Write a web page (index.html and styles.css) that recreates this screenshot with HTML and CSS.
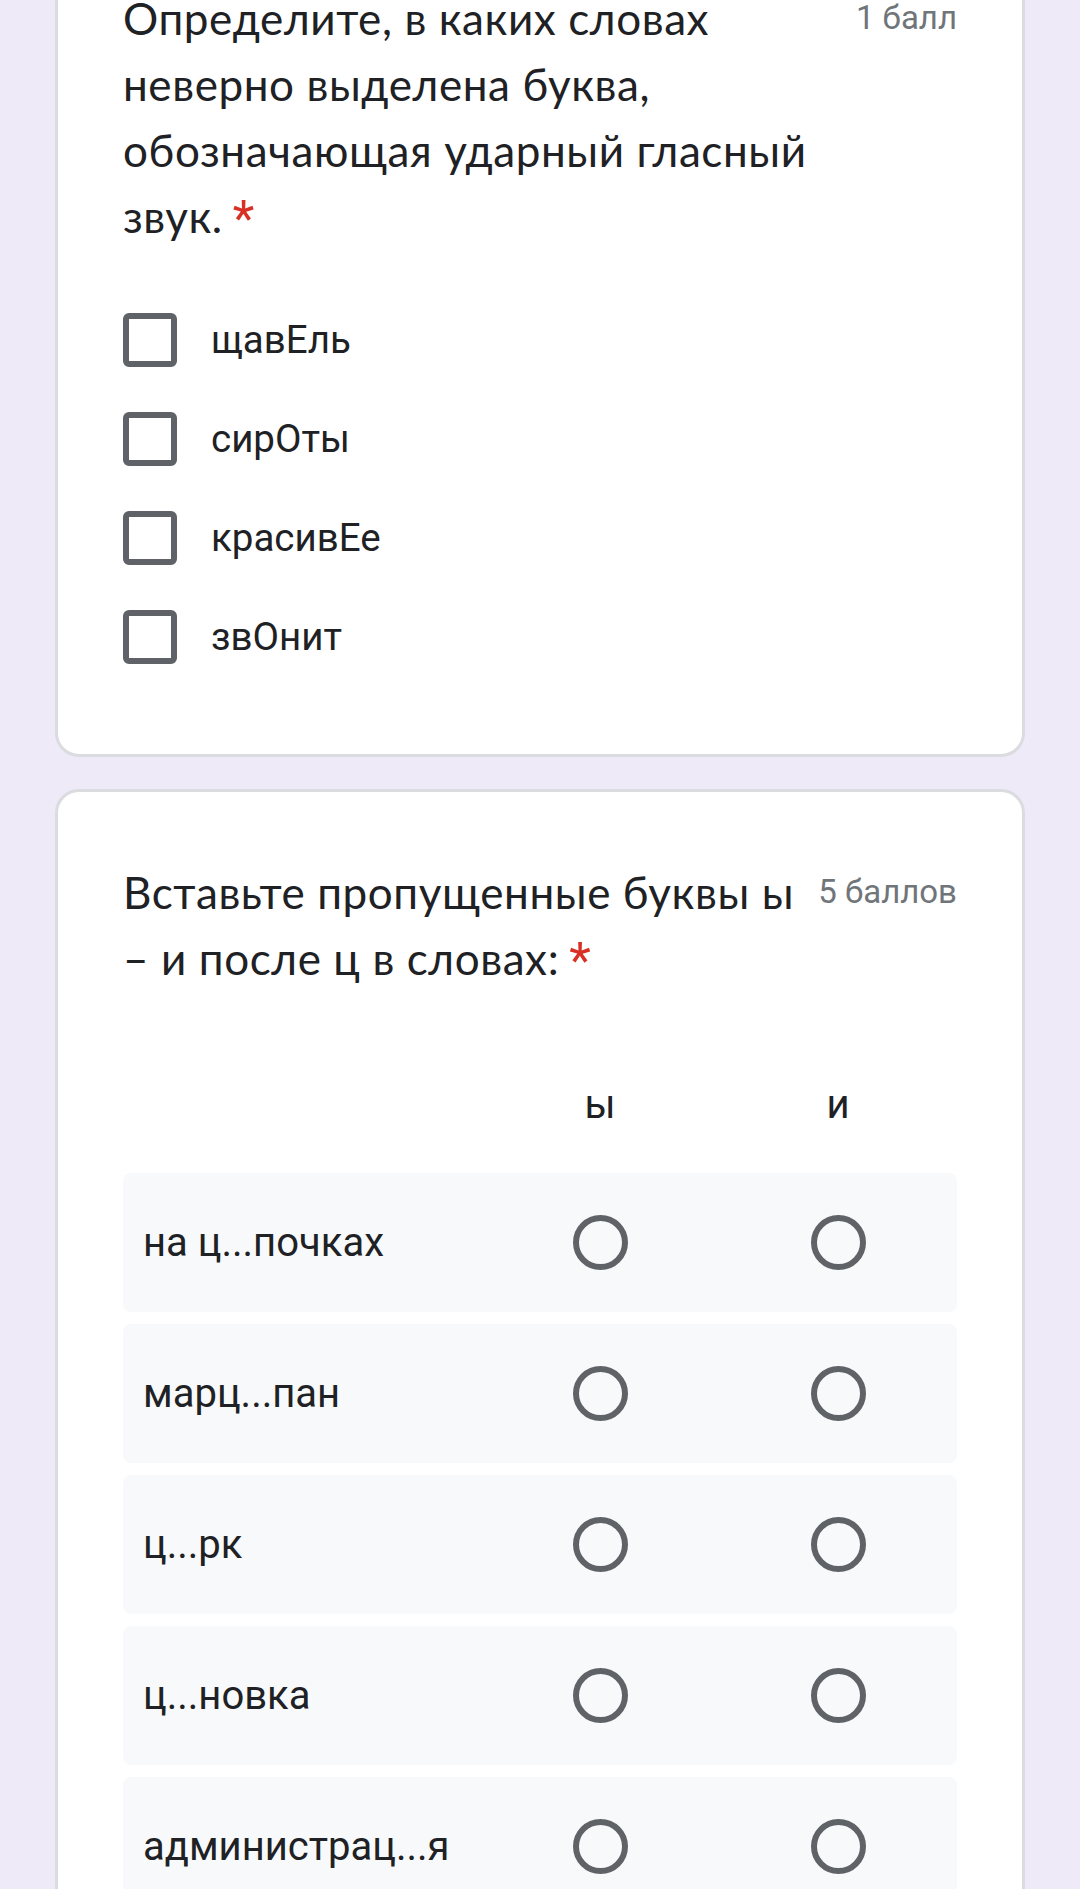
FILE: index.html
```html
<!DOCTYPE html>
<html lang="ru">
<head>
<meta charset="utf-8">
<title>Форма</title>
<link rel="stylesheet" href="styles.css">
</head>
<body>
<div class="page">
  <section class="card card-first">
    <div class="q-head">
      <div class="q-title">Определите, в каких словах неверно выделена буква, обозначающая ударный гласный звук.<span class="req">*</span></div>
      <div class="points">1 балл</div>
    </div>
    <div class="options">
      <div class="option"><span class="checkbox"></span><span class="opt-text">щавЕль</span></div>
      <div class="option"><span class="checkbox"></span><span class="opt-text">сирОты</span></div>
      <div class="option"><span class="checkbox"></span><span class="opt-text">красивЕе</span></div>
      <div class="option"><span class="checkbox"></span><span class="opt-text">звОнит</span></div>
    </div>
  </section>

  <section class="card">
    <div class="q-head">
      <div class="q-title">Вставьте пропущенные буквы ы – и после ц в словах:<span class="req">*</span></div>
      <div class="points">5 баллов</div>
    </div>
    <div class="grid">
      <div class="grid-head">
        <span></span>
        <span class="col-label">ы</span>
        <span class="col-label">и</span>
      </div>
      <div class="grid-row"><span class="row-label">на ц...почках</span><span class="cell"><span class="radio"></span></span><span class="cell"><span class="radio"></span></span></div>
      <div class="grid-row"><span class="row-label">марц...пан</span><span class="cell"><span class="radio"></span></span><span class="cell"><span class="radio"></span></span></div>
      <div class="grid-row"><span class="row-label">ц...рк</span><span class="cell"><span class="radio"></span></span><span class="cell"><span class="radio"></span></span></div>
      <div class="grid-row"><span class="row-label">ц...новка</span><span class="cell"><span class="radio"></span></span><span class="cell"><span class="radio"></span></span></div>
      <div class="grid-row"><span class="row-label">администрац...я</span><span class="cell"><span class="radio"></span></span><span class="cell"><span class="radio"></span></span></div>
    </div>
  </section>
</div>
</body>
</html>
```

FILE: styles.css
```css
html, body {
  margin: 0;
  padding: 0;
}
body {
  background: #eeeaf8;
  font-family: Roboto, "Noto Sans", sans-serif;
  color: #202124;
  overflow: hidden;
}
.page {
  padding: 0 55px;
  margin-top: -83px;
}
.card {
  background: #fff;
  border: 3px solid #dadce0;
  border-radius: 24px;
  padding: 65px 65px 68px;
}
.card + .card {
  margin-top: 32px;
  padding-top: 67px;
}
.q-head {
  display: flex;
  align-items: flex-start;
  gap: 20px;
}
.q-title {
  flex: 1;
  font-family: Lato, "Open Sans", sans-serif;
  font-size: 44px;
  line-height: 66px;
  letter-spacing: 0.6px;
  color: #202124;
}
.req {
  color: #d93025;
  margin-left: 10px;
  font-family: Roboto, sans-serif;
  font-size: 50px;
  line-height: 0;
  vertical-align: -3px;
}
.points {
  font-size: 33px;
  line-height: 66px;
  color: #70757a;
  white-space: nowrap;
}
.options {
  margin-top: 41px;
}
.option {
  height: 99px;
  display: flex;
  align-items: center;
  gap: 34px;
}
.checkbox {
  width: 54px;
  height: 54px;
  box-sizing: border-box;
  border: 6px solid #5f6368;
  border-radius: 6px;
  flex: none;
}
.opt-text {
  font-size: 38.5px;
  color: #202124;
}
.grid {
  margin-top: 80px;
}
.grid-head,
.grid-row {
  display: grid;
  grid-template-columns: 1fr 238px 238px;
  align-items: center;
}
.grid-head {
  height: 66px;
  margin-bottom: 36px;
}
.col-label {
  text-align: center;
  font-size: 40px;
}
.grid-row {
  height: 139px;
  background: #f8f9fa;
  border-radius: 8px;
  margin-bottom: 12px;
}
.row-label {
  padding-left: 20px;
  font-size: 40px;
}
.cell {
  display: flex;
  justify-content: center;
}
.radio {
  width: 55px;
  height: 55px;
  box-sizing: border-box;
  border: 6px solid #5f6368;
  border-radius: 50%;
}
```
